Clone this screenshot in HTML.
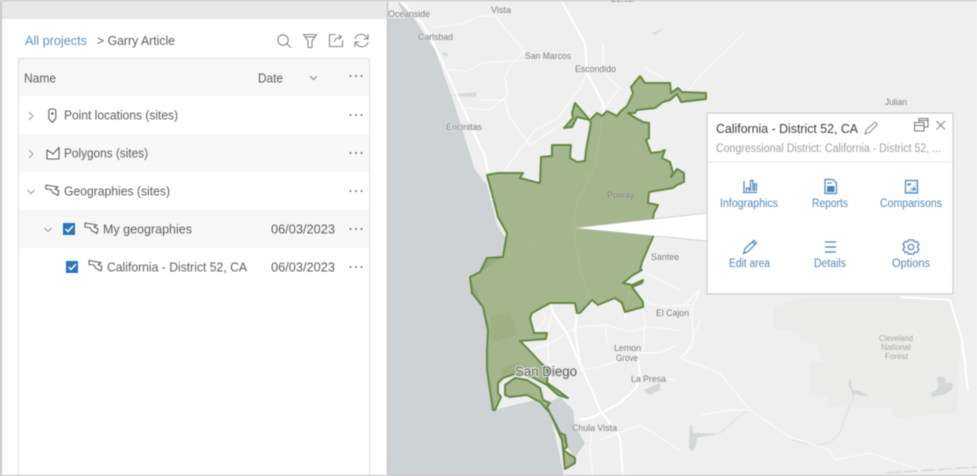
<!DOCTYPE html>
<html><head><meta charset="utf-8"><style>
html,body{margin:0;padding:0;background:#fff;width:977px;height:476px;overflow:hidden}
svg{display:block;filter:blur(.5px)}
text{font-family:"Liberation Sans",sans-serif;font-size:13px;fill:#5e5e5e}
.m{font-size:9.5px;fill:#808080;paint-order:stroke;stroke:#f0f0f0;stroke-width:1px}
.b{fill:#5089bb;font-size:11.5px}
.r{fill:none;stroke:#fff;stroke-width:1;stroke-opacity:.85}
.R{fill:none;stroke:#fff;stroke-width:2}
.i{fill:none;stroke:#888;stroke-width:1.1}
.g{fill:#fff;stroke:#5e5e5e;stroke-width:1.1;stroke-linejoin:round}
.u{fill:none;stroke:#4a84b8;stroke-width:1.2}
</style></head><body>
<svg width="977" height="476" viewBox="0 0 977 476" xmlns="http://www.w3.org/2000/svg">
<rect width="977" height="476" fill="#fff"/>
<!-- MAP -->
<rect x="388" y="0" width="589" height="476" fill="#efefef"/>
<path d="M773 307L807 297H953L960 340L957 413L893 418L892 408L828 407L828 397L810 395L810 363L822 362L817 345L800 340V332L773 330Z" fill="#ebeceA"/>
<path d="M388 18H405L397 0L413 17L435 50L452 97L475 170L487 185L497 225L507 240L503 257L483 270L470 277L483 307L488 330L487 370L493 410L535 400L550 413L563 470V476H388Z" fill="#cdd2d4"/>
<path d="M560 397L573 410L575 427L585 443L575 457L567 447L560 433L547 403Z" fill="#cdd2d4"/>
<!-- lakes -->
<path d="M690 425L689 448L692 452L696 446L697 438L718 434L697 433L693 433L692 425Z" fill="#d5d8da"/>
<path d="M938 376L945 377L946 383L953 383L952 390L943 395L932 397L931 393L937 390L939 385L937 380Z" fill="#d5d8da"/>
<path d="M851 377L848 385L852 392L853 399L855 394L870 397L860 391L853 390L851 384Z" fill="#d5d8da"/>
<path d="M643 390L660 383L660 390L650 395Z" fill="#d5d8da"/>
<path d="M452 95L458 94L477 92L476 97L458 96Z" fill="#d8dbdd"/>
<path d="M440 54L449 57L446 52Z" fill="#d8dbdd"/>
<path d="M651 34L658 30L664 28L656 35Z" fill="#dfe1e2"/>
<path d="M853 398L844 420L840 433L830 443L817 445L803 443L792 440M719 434L735 420L750 408" fill="none" stroke="#dfe1e2" stroke-width="1"/>
<!-- roads -->
<path class="R" d="M402 2L422 23L438 52L458 97L485 157L488 172"/>
<path class="R" d="M562 2L585 43L587 73L603 103L604 116"/>
<path class="r" d="M603 43V72L620 88L603 110"/>
<path class="r" d="M447 70L468 71L482 63L525 60L570 58"/>
<path class="r" d="M432 27L462 24L480 16L495 16L525 52L510 65L505 78L508 95L490 110L465 108"/>
<path class="r" d="M505 170L535 130L558 118L580 88L586 75"/>
<path class="r" d="M480 100L505 100L510 118L530 145L560 125L590 118L603 115"/>
<path class="r" d="M490 200L540 180L560 182"/>
<path class="r" d="M680 103L700 75L725 52L745 32" stroke-opacity=".5"/>
<path class="r" d="M645 68L663 78L680 103"/>
<path class="R" d="M900 297L950 300L962 340L968 390" stroke-width="1.300"/>
<path class="r" d="M683 306L700 290L692 307L693 345L680 358L720 373L750 410L790 437L830 450L835 460L870 453L920 470"/>
<path class="r" d="M685 358L700 320M700 415L730 410L750 410M640 300L660 306L690 305"/>
<path d="M887 473L977 467" fill="none" stroke="#cfcfcf" stroke-width="1" stroke-dasharray="14 3"/>
<!-- road network San Diego -->
<path class="R" d="M550 303L553 313L567 333L577 357L593 393L600 410L620 437L623 476"/>
<path class="R" d="M577 313L575 330L578 350L580 365"/>
<path class="r" d="M527 350L547 345L577 327L607 325L630 332L647 327L680 330"/>
<path class="r" d="M577 370L600 367L620 360L640 353L660 353L677 345"/>
<path class="R" d="M637 353L640 373L637 387L620 403L593 417L580 420" stroke-width="1.500"/>
<path class="r" d="M551 315L547 335L550 380M593 417L590 450L593 476M643 375L677 380M640 300L645 320L643 353M605 325L607 345M625 320L630 290"/>
<path class="r" d="M545 320L530 340M640 270L680 290M600 440L640 425L680 450"/>
<!-- inner district roads -->
<path d="M603 113L595 167L577 203L573 227L578 257L580 270L590 300" fill="none" stroke="#fff" stroke-width="1.800" stroke-opacity=".8"/>
<path d="M498 208L530 195L548 183L570 190L592 170M505 255L520 245L575 240M515 240L530 270L540 295L545 320M505 270L540 265L575 262M600 145L640 148M490 295L535 290M570 270L555 300" fill="none" stroke="#fff" stroke-width="1" stroke-opacity=".5"/>
<!-- district -->
<path d="M487 175L498 173L523 173L520 178L535 182L540 183L541 157L552 156L552 145L571 145L570 158L577 162L585 161L586 150L591 123L588 118L575 103L572 113L573 118L564 128L572 127L577 117L590 120L597 113L602 116L607 111L617 116L620 112L627 106L633 93L631 87L640 76L645 83L670 83L671 93L678 88L682 92L706 93L706 99L681 102L677 94L670 100L663 102L655 108L637 110L635 113L628 113L634 117L643 122L649 123L649 138L646 140L651 153L660 152L665 150L662 158L670 162L673 173L671 177L677 169L684 173L684 182L677 185L673 188L649 192L648 203L658 205L654 213L653 218L653 237L642 262L640 270L642 270L633 275L623 283L632 285L643 280L642 283L632 287L643 302L643 307L625 312L622 303L615 298L605 302L598 305L592 300L580 313L577 313L575 303L550 303L532 313L530 318L534 333L547 333L546 339L520 341L527 348L540 362L548 370L547 383L560 392L568 398L558 395L547 385L532 377L517 373L503 378L498 383L498 393L501 397L495 410L493 410L487 370L487 350L488 330L483 307L472 293L470 277L480 272L487 258L503 257L507 233L498 217L493 197Z" fill="#75934f" fill-opacity=".62" stroke="#638a42" stroke-width="2" stroke-linejoin="round"/>
<path d="M505 395L505 385L515 378L527 380L540 388L543 400L550 403L547 407L560 433L565 435L567 447L563 450L575 458L575 463L565 469L562 440L550 413L540 402L527 395L510 397Z" fill="#75934f" fill-opacity=".62" stroke="#638a42" stroke-width="2" stroke-linejoin="round"/>
<path d="M490 316L510 312L517 335L492 342ZM500 370L517 362L535 370L528 376L505 378Z" fill="#75934f" fill-opacity=".14"/>
<!-- map labels -->
<text class="m" x="388" y="17" textLength="42" lengthAdjust="spacingAndGlyphs">Oceanside</text>
<text class="m" x="491" y="13" textLength="20" lengthAdjust="spacingAndGlyphs">Vista</text>
<text class="m" x="418" y="40" textLength="35" lengthAdjust="spacingAndGlyphs">Carlsbad</text>
<text class="m" x="525" y="59" textLength="46" lengthAdjust="spacingAndGlyphs">San Marcos</text>
<text class="m" x="575" y="72" textLength="41" lengthAdjust="spacingAndGlyphs">Escondido</text>
<text class="m" x="446" y="130" textLength="36" lengthAdjust="spacingAndGlyphs">Encinitas</text>
<text class="m" x="610" y="2" textLength="25" lengthAdjust="spacingAndGlyphs">Center</text>
<text class="m" x="607" y="198" textLength="27" lengthAdjust="spacingAndGlyphs" style="stroke:#b5c3a1">Poway</text>
<text class="m" x="651" y="260" textLength="28" lengthAdjust="spacingAndGlyphs">Santee</text>
<text class="m" x="656" y="316" textLength="33" lengthAdjust="spacingAndGlyphs">El Cajon</text>
<text class="m" x="614" y="351" textLength="27" lengthAdjust="spacingAndGlyphs">Lemon</text>
<text class="m" x="616" y="361" textLength="22" lengthAdjust="spacingAndGlyphs">Grove</text>
<text class="m" x="631" y="382" textLength="35" lengthAdjust="spacingAndGlyphs">La Presa</text>
<text class="m" x="572" y="431" textLength="45" lengthAdjust="spacingAndGlyphs">Chula Vista</text>
<text class="m" x="885" y="105" textLength="22" lengthAdjust="spacingAndGlyphs">Julian</text>
<text class="m" x="515" y="376" textLength="62" lengthAdjust="spacingAndGlyphs" style="font-size:13.500px;fill:#5f5f5f;stroke:#e6e6e6;stroke-width:2px">San Diego</text>
<text class="m" x="879" y="341" textLength="34" lengthAdjust="spacingAndGlyphs" style="font-size:8px;fill:#a5aba0;stroke:none">Cleveland</text>
<text class="m" x="881" y="350" textLength="30" lengthAdjust="spacingAndGlyphs" style="font-size:8px;fill:#a5aba0;stroke:none">National</text>
<text class="m" x="885" y="359" textLength="23" lengthAdjust="spacingAndGlyphs" style="font-size:8px;fill:#a5aba0;stroke:none">Forest</text>
<!-- callout -->
<path d="M707 213L575 228L707 241Z" fill="#fff"/>
<path d="M707 213L575 228L707 241" fill="none" stroke="#c8c8c8" stroke-width=".8"/>
<rect x="707" y="113" width="246" height="181" fill="#fff" stroke="#c4c4c4" stroke-width="1"/>
<rect x="708" y="161" width="244" height="2" fill="#f0f0f0"/>
<text x="716" y="133" textLength="142" lengthAdjust="spacingAndGlyphs" style="fill:#3d3d3d;font-size:13px">California - District 52, CA</text>
<text x="716" y="152" textLength="225" lengthAdjust="spacingAndGlyphs" style="fill:#a0a0a0;font-size:11.500px">Congressional District: California - District 52, ...</text>
<path d="M865 134L866.500 129.500L875 122L877.500 124.500L869.500 132.500Z" fill="none" stroke="#888" stroke-width="1"/>
<path d="M919 122V118.500H928V127H924.500M914.500 122.500H924V131H914.500ZM914.500 125.500H924M919 120.500H928" fill="none" stroke="#777" stroke-width="1"/>
<path d="M936.500 121L945 129.500M945 121L936.500 129.500" fill="none" stroke="#888" stroke-width="1.100"/>
<!-- popup icons -->
<path class="u" d="M743 192.500H757"/>
<path class="u" d="M744 192V181M746.500 191V188H749V191M750.500 191V180.500H753V191M754.500 191V184H756.500V191" stroke-width="1"/>
<path class="u" d="M825 179.500H833L836.500 183V193.500H825Z"/><path d="M827 186H834.500V192H827Z" fill="#4a84b8"/><path class="u" d="M827 183H832" stroke-width=".8"/>
<path class="u" d="M905.500 180.500H917.500V193H905.500Z"/><path class="u" d="M907.500 184H911.500M907.500 184L909.500 186M915.500 189.500H911.500M915.500 189.500L913.500 187.500" stroke-width=".9"/><path d="M905.500 193L917.500 180.500V193Z" fill="#4a84b8" fill-opacity=".18"/>
<path class="u" d="M743.500 253.500L745 248.500L754 240.500L756.500 243L748 251.500ZM752.500 242L755 244.500"/>
<path class="u" d="M825 242H836M825 247H836M825 252H836" stroke-width="1.400"/>
<circle cx="911" cy="247" r="2.800" class="u"/>
<path class="u" d="M908.500 240H913.500L914.500 242L917 241.500L919 244.500L917.300 247L919 249.500L917 252.500L914.500 252L913.500 254H908.500L907.500 252L905 252.500L903 249.500L904.700 247L903 244.500L905 241.500L907.500 242Z"/>
<text class="b" x="720" y="207" textLength="58" lengthAdjust="spacingAndGlyphs">Infographics</text>
<text class="b" x="812" y="207" textLength="36" lengthAdjust="spacingAndGlyphs">Reports</text>
<text class="b" x="880" y="207" textLength="62" lengthAdjust="spacingAndGlyphs">Comparisons</text>
<text class="b" x="729" y="267" textLength="41" lengthAdjust="spacingAndGlyphs">Edit area</text>
<text class="b" x="814" y="267" textLength="32" lengthAdjust="spacingAndGlyphs">Details</text>
<text class="b" x="892" y="267" textLength="38" lengthAdjust="spacingAndGlyphs">Options</text>
<!-- LEFT PANEL -->
<rect x="0" y="0" width="388" height="476" fill="#fff"/>
<rect x="1" y="1" width="386" height="18" fill="#e8e8e8"/>
<rect x="18" y="58" width="352" height="38" fill="#f7f7f7"/>
<rect x="18" y="134" width="352" height="38" fill="#f8f8f8"/>
<rect x="18" y="210" width="352" height="38" fill="#f7f7f7"/>
<path d="M18.500 476V58.500H369.500V476" fill="none" stroke="#dedede"/>
<path d="M0 .5H977M.5 0V476M387.500 0V476M0 475.500H977" fill="none" stroke="#bcbcbc"/>
<path d="M1.500 0V476" stroke="#ccc"/>
<text x="25" y="45" textLength="62" lengthAdjust="spacingAndGlyphs" style="fill:#5b93c9">All projects</text>
<text x="97" y="45" textLength="78" lengthAdjust="spacingAndGlyphs">&gt; Garry Article</text>
<circle cx="283" cy="40" r="5.200" class="i"/><path class="i" d="M286.800 43.800L291 47.500"/>
<path class="i" d="M303.500 34.500H316.500L312 41V47.500H308V41Z"/><path class="i" d="M305 37H315"/>
<path class="i" d="M336 34.500H329.500V46.500H342.500V40"/><path class="i" d="M334.500 42C335 38.500 338 37 341 37M338.500 34.500L341.500 37L338.500 39.500"/>
<path class="i" d="M355 39C356 34.500 361 33 365 35.500L367.500 38.500M368 34V39H363.500M368 42C367 46.500 362 48 358 45.500L355.500 42.500M355 47V42H359.500"/>
<text x="24" y="82.500" textLength="32" lengthAdjust="spacingAndGlyphs">Name</text>
<text x="258" y="82.500" textLength="25" lengthAdjust="spacingAndGlyphs">Date</text>
<path d="M310 76L313.500 79.500L317 76" fill="none" stroke="#888" stroke-width="1"/>
<g fill="#6e6e6e">
<circle cx="350.500" cy="76" r="1"/><circle cx="356" cy="76" r="1"/><circle cx="361.500" cy="76" r="1"/>
<circle cx="350.500" cy="115" r="1"/><circle cx="356" cy="115" r="1"/><circle cx="361.500" cy="115" r="1"/>
<circle cx="350.500" cy="153" r="1"/><circle cx="356" cy="153" r="1"/><circle cx="361.500" cy="153" r="1"/>
<circle cx="350.500" cy="191" r="1"/><circle cx="356" cy="191" r="1"/><circle cx="361.500" cy="191" r="1"/>
<circle cx="350.500" cy="229" r="1"/><circle cx="356" cy="229" r="1"/><circle cx="361.500" cy="229" r="1"/>
<circle cx="350.500" cy="267" r="1"/><circle cx="356" cy="267" r="1"/><circle cx="361.500" cy="267" r="1"/>
</g>
<path d="M29 112L33 116L29 120M29 150L33 154L29 158" fill="none" stroke="#999" stroke-width="1"/>
<path d="M27.500 190L31 193.500L34.500 190M44.500 228L48 231.500L51.500 228" fill="none" stroke="#999" stroke-width="1"/>
<path class="g" d="M48.800 111.500Q48.800 109 51 109H53.500Q55.800 109 55.800 111.500V118.500L52.300 122.500L48.800 118.500Z"/><circle cx="52.300" cy="113.500" r="1.300" fill="#5e5e5e"/>
<path class="g" d="M47 150L53 154L59 147.500V159H47Z"/>
<path class="g" d="M46 185L58 187L55 189L59 191L58 195.500L52.500 192.500L51 189.500L46 189Z"/>
<path class="g" d="M85 223L97 225L94 227L98 229L97 233.500L91.500 230.500L90 227.500L85 227Z"/>
<path class="g" d="M89 260.500L101 262.500L98 264.500L102 266.500L101 271L95.500 268L94 265L89 264.500Z"/>
<text x="64" y="119.500" textLength="114" lengthAdjust="spacingAndGlyphs">Point locations (sites)</text>
<text x="64" y="157.500" textLength="84" lengthAdjust="spacingAndGlyphs">Polygons (sites)</text>
<text x="64" y="195.500" textLength="106" lengthAdjust="spacingAndGlyphs">Geographies (sites)</text>
<text x="103" y="233.500" textLength="89" lengthAdjust="spacingAndGlyphs">My geographies</text>
<text x="107" y="271.500" textLength="140" lengthAdjust="spacingAndGlyphs">California - District 52, CA</text>
<text x="271" y="233.500" textLength="64" lengthAdjust="spacingAndGlyphs">06/03/2023</text>
<text x="271" y="271.500" textLength="64" lengthAdjust="spacingAndGlyphs">06/03/2023</text>
<rect x="63" y="223" width="12" height="12" fill="#2a74bb"/>
<rect x="66" y="261" width="12" height="12" fill="#2a74bb"/>
<path d="M65.500 229L68 231.500L73 226M68.500 267L71 269.500L76 264" fill="none" stroke="#fff" stroke-width="1.500"/>
</svg>
</body></html>
